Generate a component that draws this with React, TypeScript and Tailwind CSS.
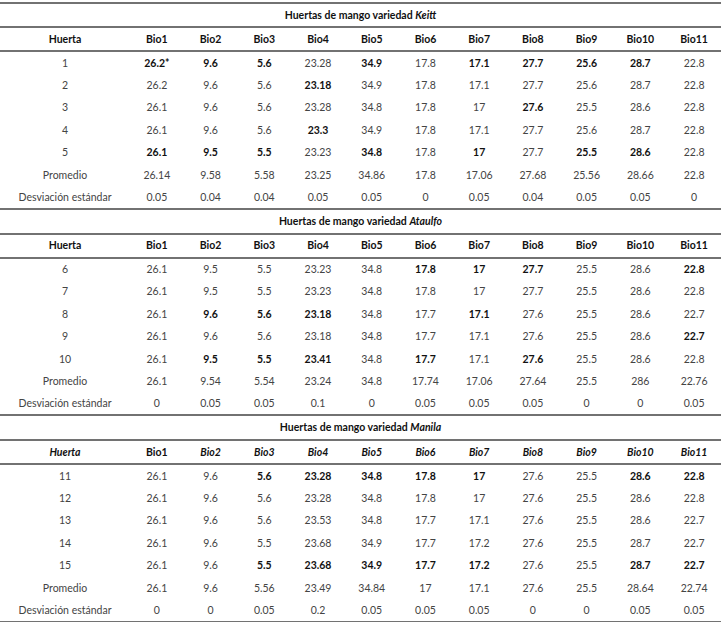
type Cell = string | { v: string; b: true };

interface Section {
  variety: string;
  italicHead?: boolean;
  rows: { label: string; cells: Cell[] }[];
}

const B = (v: string): Cell => ({ v, b: true });

const sections: Section[] = [
  {
    variety: "Keitt",
    rows: [
      { label: "1", cells: [B("26.2*"), B("9.6"), B("5.6"), "23.28", B("34.9"), "17.8", B("17.1"), B("27.7"), B("25.6"), B("28.7"), "22.8"] },
      { label: "2", cells: ["26.2", "9.6", "5.6", B("23.18"), "34.9", "17.8", "17.1", "27.7", "25.6", "28.7", "22.8"] },
      { label: "3", cells: ["26.1", "9.6", "5.6", "23.28", "34.8", "17.8", "17", B("27.6"), "25.5", "28.6", "22.8"] },
      { label: "4", cells: ["26.1", "9.6", "5.6", B("23.3"), "34.9", "17.8", "17.1", "27.7", "25.6", "28.7", "22.8"] },
      { label: "5", cells: [B("26.1"), B("9.5"), B("5.5"), "23.23", B("34.8"), "17.8", B("17"), "27.7", B("25.5"), B("28.6"), "22.8"] },
      { label: "Promedio", cells: ["26.14", "9.58", "5.58", "23.25", "34.86", "17.8", "17.06", "27.68", "25.56", "28.66", "22.8"] },
      { label: "Desviación estándar", cells: ["0.05", "0.04", "0.04", "0.05", "0.05", "0", "0.05", "0.04", "0.05", "0.05", "0"] },
    ],
  },
  {
    variety: "Ataulfo",
    rows: [
      { label: "6", cells: ["26.1", "9.5", "5.5", "23.23", "34.8", B("17.8"), B("17"), B("27.7"), "25.5", "28.6", B("22.8")] },
      { label: "7", cells: ["26.1", "9.5", "5.5", "23.23", "34.8", "17.8", "17", "27.7", "25.5", "28.6", "22.8"] },
      { label: "8", cells: ["26.1", B("9.6"), B("5.6"), B("23.18"), "34.8", "17.7", B("17.1"), "27.6", "25.5", "28.6", "22.7"] },
      { label: "9", cells: ["26.1", "9.6", "5.6", "23.18", "34.8", "17.7", "17.1", "27.6", "25.5", "28.6", B("22.7")] },
      { label: "10", cells: ["26.1", B("9.5"), B("5.5"), B("23.41"), "34.8", B("17.7"), "17.1", B("27.6"), "25.5", "28.6", "22.8"] },
      { label: "Promedio", cells: ["26.1", "9.54", "5.54", "23.24", "34.8", "17.74", "17.06", "27.64", "25.5", "286", "22.76"] },
      { label: "Desviación estándar", cells: ["0", "0.05", "0.05", "0.1", "0", "0.05", "0.05", "0.05", "0", "0", "0.05"] },
    ],
  },
  {
    variety: "Manila",
    italicHead: true,
    rows: [
      { label: "11", cells: ["26.1", "9.6", B("5.6"), B("23.28"), B("34.8"), B("17.8"), B("17"), "27.6", "25.5", B("28.6"), B("22.8")] },
      { label: "12", cells: ["26.1", "9.6", "5.6", "23.28", "34.8", "17.8", "17", "27.6", "25.5", "28.6", "22.8"] },
      { label: "13", cells: ["26.1", "9.6", "5.6", "23.53", "34.8", "17.7", "17.1", "27.6", "25.5", "28.6", "22.7"] },
      { label: "14", cells: ["26.1", "9.6", "5.5", "23.68", "34.9", "17.7", "17.2", "27.6", "25.5", "28.7", "22.7"] },
      { label: "15", cells: ["26.1", "9.6", B("5.5"), B("23.68"), B("34.9"), B("17.7"), B("17.2"), "27.6", "25.5", B("28.7"), B("22.7")] },
      { label: "Promedio", cells: ["26.1", "9.6", "5.56", "23.49", "34.84", "17", "17.1", "27.6", "25.5", "28.64", "22.74"] },
      { label: "Desviación estándar", cells: ["0", "0", "0.05", "0.2", "0.05", "0.05", "0.05", "0", "0", "0.05", "0.05"] },
    ],
  },
];

const bios = ["Bio1", "Bio2", "Bio3", "Bio4", "Bio5", "Bio6", "Bio7", "Bio8", "Bio9", "Bio10", "Bio11"];

function SectionTable({ s, first }: { s: Section; first: boolean }) {
  return (
    <table className={`w-full table-fixed border-collapse border-b-2 border-[#727272] ${first ? "border-t-2" : ""}`}>
      <colgroup>
        <col className="w-[130px]" />
        {bios.map((b) => (
          <col key={b} />
        ))}
      </colgroup>
      <thead>
        <tr className="h-[24px] border-b-2 border-[#727272]">
          <th colSpan={12} className="p-0 text-center font-bold text-[#111]">
            Huertas de mango variedad <i>{s.variety}</i>
          </th>
        </tr>
        <tr className="h-[24px] border-b-2 border-[#727272]">
          <th className={`p-0 text-center font-bold text-[#111] ${s.italicHead ? "italic" : ""}`}>Huerta</th>
          {bios.map((b, i) => (
            <th
              key={b}
              className={`p-0 text-center font-bold text-[#111] ${s.italicHead && i > 0 ? "italic" : ""}`}
            >
              {b}
            </th>
          ))}
        </tr>
      </thead>
      <tbody>
        {s.rows.map((r) => (
          <tr key={r.label} className="h-[22.5px]">
            <td className="p-0 text-center text-[#444] whitespace-nowrap">{r.label}</td>
            {r.cells.map((c, i) =>
              typeof c === "string" ? (
                <td key={i} className="p-0 text-center text-[#444]">
                  {c}
                </td>
              ) : (
                <td key={i} className="p-0 text-center font-bold text-[#111]">
                  {c.v}
                </td>
              )
            )}
          </tr>
        ))}
      </tbody>
    </table>
  );
}

export default function App() {
  return (
    <div className="w-[721px] h-[622px] bg-white pt-[2px] font-['Lato','Liberation_Sans',sans-serif] text-[10.5px] leading-none">
      {sections.map((s, i) => (
        <SectionTable key={s.variety} s={s} first={i === 0} />
      ))}
    </div>
  );
}
